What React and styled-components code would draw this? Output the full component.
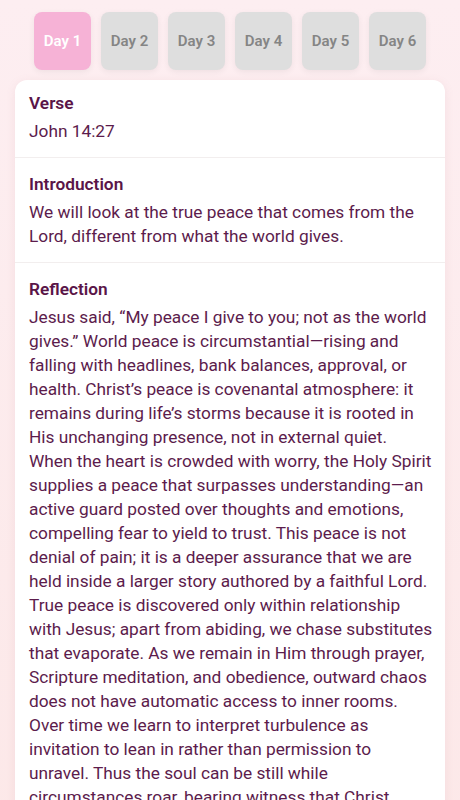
import React, { useState } from 'react';
import styled, { createGlobalStyle } from 'styled-components';

const GlobalStyle = createGlobalStyle`
  body {
    margin: 0;
    font-family: Roboto, "Liberation Sans", sans-serif;
    background: linear-gradient(180deg, #fdeef1 0%, #fce8e8 100%);
    min-height: 100vh;
  }
`;

const Page = styled.div`
  padding: 12px 15px 20px;
  display: flex;
  flex-direction: column;
  gap: 10px;
`;

const Tabs = styled.div`
  display: flex;
  justify-content: center;
  gap: 10px;
`;

const Tab = styled.button`
  width: 57px;
  height: 58px;
  border: none;
  border-radius: 8px;
  font-family: inherit;
  font-size: 15px;
  font-weight: 600;
  cursor: pointer;
  background: ${p => (p.$active ? '#f6b2d6' : '#dedede')};
  color: ${p => (p.$active ? '#ffffff' : '#858585')};
  box-shadow: 0 2px 6px rgba(0, 0, 0, 0.06);
`;

const Card = styled.div`
  background: #fff;
  border-radius: 12px;
  box-shadow: 0 2px 10px rgba(180, 120, 130, 0.12);
  overflow: hidden;
`;

const Section = styled.section`
  padding: 15px 12px 14px 14px;
  border-bottom: 1px solid #f2eeee;

  &:first-child {
    padding-top: 12px;
  }

  &:last-child {
    border-bottom: none;
  }
`;

const Heading = styled.h3`
  margin: 0 0 4px;
  font-size: 17.3px;
  font-weight: 600;
  line-height: 23px;
  color: #5a1548;
`;

const Body = styled.p`
  margin: 0;
  font-size: 17.3px;
  line-height: 24px;
  color: #5c1c4c;
`;

const days = ['Day 1', 'Day 2', 'Day 3', 'Day 4', 'Day 5', 'Day 6'];

const sections = [
  { title: 'Verse', text: 'John 14:27' },
  {
    title: 'Introduction',
    text: 'We will look at the true peace that comes from the Lord, different from what the world gives.',
  },
  {
    title: 'Reflection',
    text:
      'Jesus said, “My peace I give to you; not as the world gives.” World peace is circumstantial—rising and falling with headlines, bank balances, approval, or health. Christ’s peace is covenantal atmosphere: it remains during life’s storms because it is rooted in His unchanging presence, not in external quiet. When the heart is crowded with worry, the Holy Spirit supplies a peace that surpasses understanding—an active guard posted over thoughts and emotions, compelling fear to yield to trust. This peace is not denial of pain; it is a deeper assurance that we are held inside a larger story authored by a faithful Lord. True peace is discovered only within relationship with Jesus; apart from abiding, we chase substitutes that evaporate. As we remain in Him through prayer, Scripture meditation, and obedience, outward chaos does not have automatic access to inner rooms. Over time we learn to interpret turbulence as invitation to lean in rather than permission to unravel. Thus the soul can be still while circumstances roar, bearing witness that Christ reigns over every wave.',
  },
];

export default function App() {
  const [day, setDay] = useState(0);

  return (
    <>
      <GlobalStyle />
      <Page>
        <Tabs>
          {days.map((d, i) => (
            <Tab key={d} $active={i === day} onClick={() => setDay(i)}>
              {d}
            </Tab>
          ))}
        </Tabs>
        <Card>
          {sections.map(s => (
            <Section key={s.title}>
              <Heading>{s.title}</Heading>
              <Body>{s.text}</Body>
            </Section>
          ))}
        </Card>
      </Page>
    </>
  );
}
